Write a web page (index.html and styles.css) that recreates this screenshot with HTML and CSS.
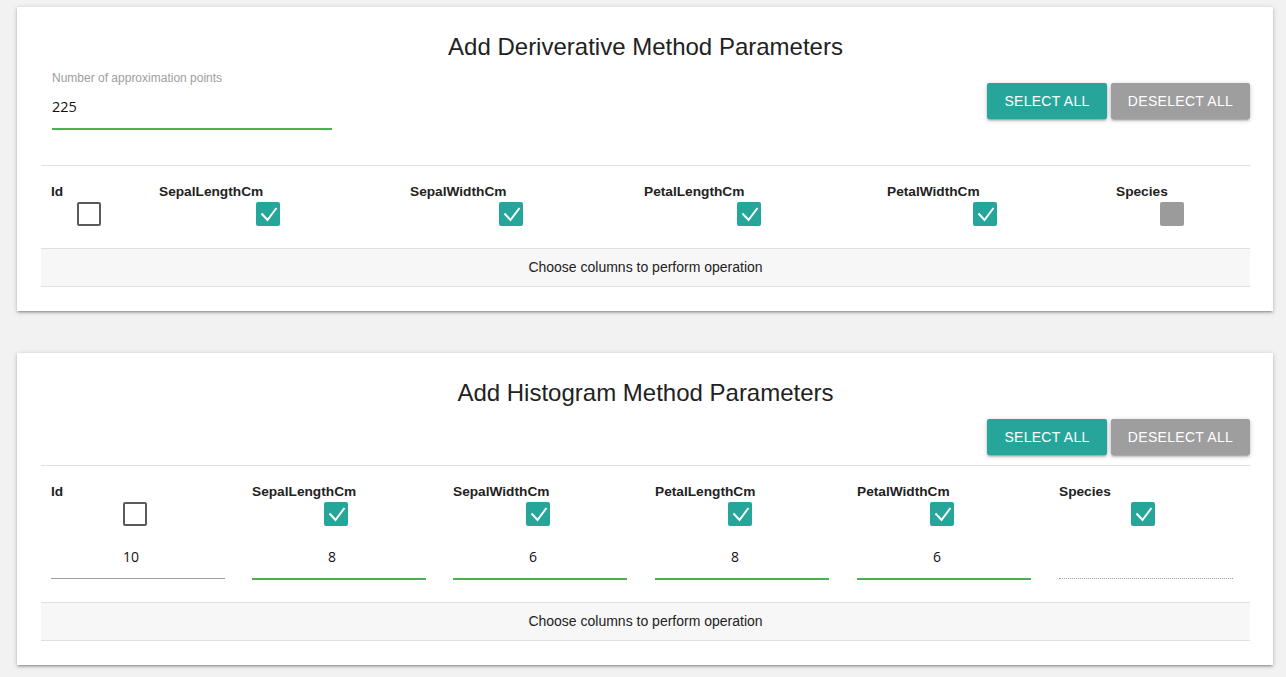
FILE: index.html
```html
<!DOCTYPE html>
<html>
<head>
<meta charset="utf-8">
<link rel="stylesheet" href="styles.css">
</head>
<body>
<section class="card">
  <h2 class="title">Add Deriverative Method Parameters</h2>
  <div class="top-row">
    <div class="field">
      <label class="field-label">Number of approximation points</label>
      <div class="field-input">225</div>
    </div>
    <div class="actions">
      <button class="btn btn-teal">SELECT ALL</button>
      <button class="btn btn-grey">DESELECT ALL</button>
    </div>
  </div>
  <div class="cols cols-a">
    <div class="col"><div class="col-head">Id</div><div class="cb-wrap"><span class="cb"></span></div></div>
    <div class="col"><div class="col-head">SepalLengthCm</div><div class="cb-wrap"><span class="cb on"><svg viewBox="0 0 24 24"><path d="M5.5 11.5l6 6.5 9-12"/></svg></span></div></div>
    <div class="col"><div class="col-head">SepalWidthCm</div><div class="cb-wrap"><span class="cb on"><svg viewBox="0 0 24 24"><path d="M5.5 11.5l6 6.5 9-12"/></svg></span></div></div>
    <div class="col"><div class="col-head">PetalLengthCm</div><div class="cb-wrap"><span class="cb on"><svg viewBox="0 0 24 24"><path d="M5.5 11.5l6 6.5 9-12"/></svg></span></div></div>
    <div class="col"><div class="col-head">PetalWidthCm</div><div class="cb-wrap"><span class="cb on"><svg viewBox="0 0 24 24"><path d="M5.5 11.5l6 6.5 9-12"/></svg></span></div></div>
    <div class="col"><div class="col-head">Species</div><div class="cb-wrap"><span class="cb dis"></span></div></div>
  </div>
  <div class="footer">Choose columns to perform operation</div>
</section>

<section class="card">
  <h2 class="title">Add Histogram Method Parameters</h2>
  <div class="actions actions-b">
    <button class="btn btn-teal">SELECT ALL</button>
    <button class="btn btn-grey">DESELECT ALL</button>
  </div>
  <div class="cols cols-b">
    <div class="col"><div class="col-head">Id</div><div class="cb-wrap"><span class="cb"></span></div><div class="val grey">10</div></div>
    <div class="col"><div class="col-head">SepalLengthCm</div><div class="cb-wrap"><span class="cb on"><svg viewBox="0 0 24 24"><path d="M5.5 11.5l6 6.5 9-12"/></svg></span></div><div class="val green">8</div></div>
    <div class="col"><div class="col-head">SepalWidthCm</div><div class="cb-wrap"><span class="cb on"><svg viewBox="0 0 24 24"><path d="M5.5 11.5l6 6.5 9-12"/></svg></span></div><div class="val green">6</div></div>
    <div class="col"><div class="col-head">PetalLengthCm</div><div class="cb-wrap"><span class="cb on"><svg viewBox="0 0 24 24"><path d="M5.5 11.5l6 6.5 9-12"/></svg></span></div><div class="val green">8</div></div>
    <div class="col"><div class="col-head">PetalWidthCm</div><div class="cb-wrap"><span class="cb on"><svg viewBox="0 0 24 24"><path d="M5.5 11.5l6 6.5 9-12"/></svg></span></div><div class="val green">6</div></div>
    <div class="col"><div class="col-head">Species</div><div class="cb-wrap"><span class="cb on"><svg viewBox="0 0 24 24"><path d="M5.5 11.5l6 6.5 9-12"/></svg></span></div><div class="val dotted"></div></div>
  </div>
  <div class="footer">Choose columns to perform operation</div>
</section>
</body>
</html>
```

FILE: styles.css
```css
* { box-sizing: border-box; }
html, body { margin: 0; }
body {
  background: #f2f2f2;
  padding: 7px 13px 0 17px;
  font-family: "Liberation Sans", Arial, sans-serif;
  color: #222;
}
.card {
  background: #fff;
  padding: 25px 23px 24px 24px;
  margin-bottom: 42px;
  box-shadow: 0 2px 2px 0 rgba(0,0,0,0.14), 0 3px 1px -2px rgba(0,0,0,0.12), 0 1px 5px 0 rgba(0,0,0,0.2);
}
.title {
  margin: 0;
  text-align: center;
  font-family: "Liberation Sans", Arial, sans-serif;
  font-weight: 400;
  font-size: 24px;
  line-height: 30px;
  color: #222;
}
.top-row {
  display: flex;
  justify-content: space-between;
  align-items: flex-start;
  height: 103px;
}
.field {
  margin-top: 9px;
  margin-left: 11px;
  width: 280px;
}
.field-label {
  display: block;
  font-family: "Liberation Sans", Arial, sans-serif;
  font-size: 12px;
  line-height: 14px;
  color: #9e9e9e;
}
.field-input {
  height: 45px;
  line-height: 43px;
  font-family: "Open Sans", "Noto Sans", sans-serif;
  font-size: 14.5px;
  color: #111;
  border-bottom: 2px solid #4caf50;
}
.actions {
  display: flex;
  gap: 4px;
  margin-top: 21px;
}
.actions-b {
  justify-content: flex-end;
  margin-top: 11px;
  margin-bottom: 10px;
}
.btn {
  height: 36px;
  border: none;
  border-radius: 2px;
  padding: 0;
  font-family: "Liberation Sans", Arial, sans-serif;
  font-size: 14px;
  letter-spacing: 0.3px;
  color: #fff;
  box-shadow: 0 2px 2px 0 rgba(0,0,0,0.14), 0 3px 1px -2px rgba(0,0,0,0.12), 0 1px 5px 0 rgba(0,0,0,0.2);
}
.btn-teal { background: #26a69a; width: 120px; }
.btn-grey { background: #9e9e9e; width: 139px; }
.cols {
  display: grid;
  border-top: 1px solid #e0e0e0;
  padding-top: 18px;
}
.cols-a {
  grid-template-columns: 108px 251px 234px 243px 229px 144px;
  padding-bottom: 22px;
}
.cols-b {
  grid-template-columns: 201px 201px 202px 202px 202px 201px;
  padding-bottom: 22px;
}
.col { padding: 0 10px; }
.col-head {
  font-family: "Liberation Sans", Arial, sans-serif;
  font-weight: 700;
  font-size: 13.7px;
  line-height: 16px;
  color: #222;
}
.cb-wrap {
  display: flex;
  justify-content: center;
  padding-right: 13px;
  margin-top: 2px;
}
.cb {
  width: 24px;
  height: 24px;
  border: 2px solid #5a5a5a;
  border-radius: 2px;
  display: block;
}
.cb.on {
  background: #26a69a;
  border: none;
}
.cb.dis {
  background: #9b9b9b;
  border: none;
}
.cb svg {
  display: block;
  width: 24px;
  height: 24px;
  fill: none;
  stroke: #fff;
  stroke-width: 2;
}
.val {
  width: 174px;
  margin-top: 9px;
  height: 44px;
  line-height: 44px;
  text-align: center;
  padding-right: 14px;
  font-family: "Open Sans", "Noto Sans", sans-serif;
  font-size: 14px;
  color: #111;
}
.val.grey { border-bottom: 1px solid #9e9e9e; }
.val.green { border-bottom: 2px solid #4caf50; height: 45px; }
.val.dotted { border-bottom: 1px dotted #9e9e9e; }
.footer {
  height: 39px;
  border-top: 1px solid #e0e0e0;
  border-bottom: 1px solid #e0e0e0;
  background: #f7f7f7;
  text-align: center;
  line-height: 37px;
  font-family: "Liberation Sans", Arial, sans-serif;
  font-size: 14px;
  color: #222;
}
```
